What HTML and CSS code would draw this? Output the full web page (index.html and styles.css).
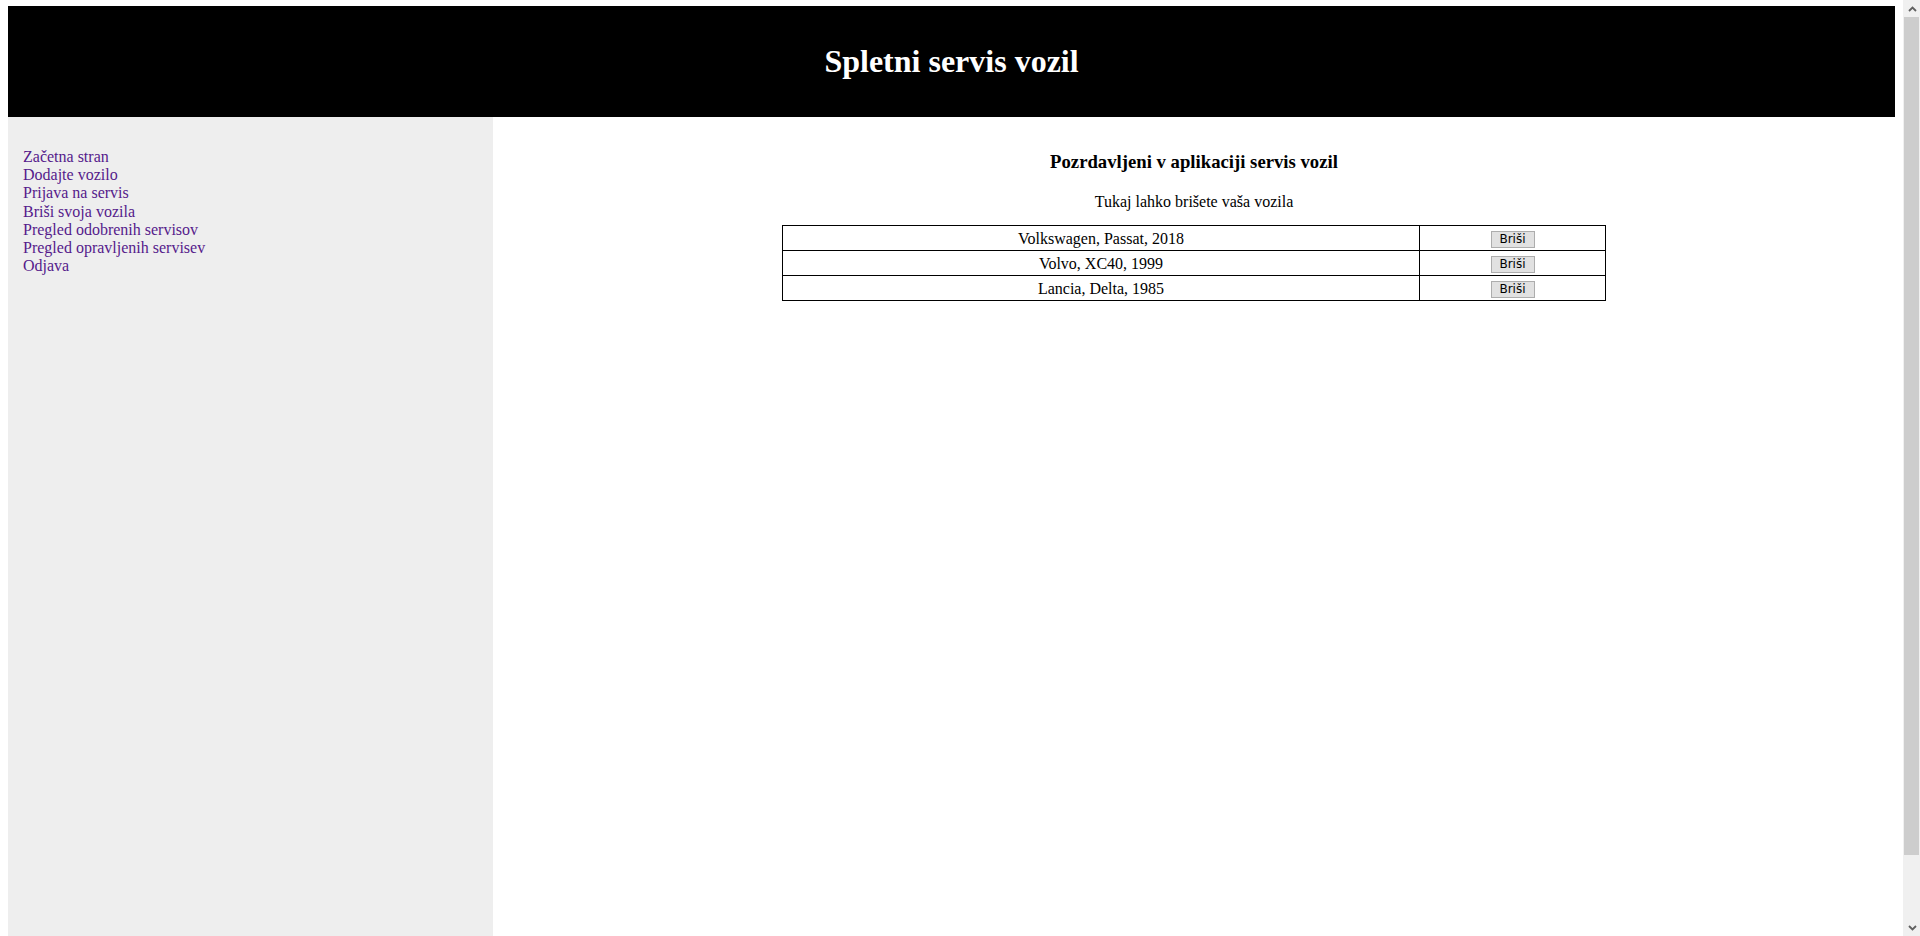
FILE: index.html
```html
<!DOCTYPE html>
<html lang="sl">
<head>
<meta charset="utf-8">
<title>Spletni servis vozil</title>
<link rel="stylesheet" href="styles.css">
</head>
<body>
<div class="viewport">
  <div class="page">
    <div class="header">
      <h1>Spletni servis vozil</h1>
    </div>
    <div class="layout">
      <nav class="sidebar">
        <ul class="menu">
          <li><a href="#">Začetna stran</a></li>
          <li><a href="#">Dodajte vozilo</a></li>
          <li><a href="#">Prijava na servis</a></li>
          <li><a href="#">Briši svoja vozila</a></li>
          <li><a href="#">Pregled odobrenih servisov</a></li>
          <li><a href="#">Pregled opravljenih servisev</a></li>
          <li><a href="#">Odjava</a></li>
        </ul>
      </nav>
      <main class="content">
        <h3 class="title">Pozrdavljeni v aplikaciji servis vozil</h3>
        <p class="intro">Tukaj lahko brišete vaša vozila</p>
        <table class="cars">
          <colgroup><col class="col-name"><col class="col-action"></colgroup>
          <tr><td>Volkswagen, Passat, 2018</td><td><button class="btn">Briši</button></td></tr>
          <tr><td>Volvo, XC40, 1999</td><td><button class="btn">Briši</button></td></tr>
          <tr><td>Lancia, Delta, 1985</td><td><button class="btn">Briši</button></td></tr>
        </table>
      </main>
    </div>
  </div>
  <div class="scrollbar" aria-hidden="true">
    <div class="sb-arrow">
      <svg width="9" height="6" viewBox="0 0 9 6"><path d="M1 5 L4.5 1.5 L8 5" fill="none" stroke="#606060" stroke-width="1.8"/></svg>
    </div>
    <div class="sb-thumb"></div>
    <div class="sb-track"></div>
    <div class="sb-arrow">
      <svg width="9" height="6" viewBox="0 0 9 6"><path d="M1 1 L4.5 4.5 L8 1" fill="none" stroke="#606060" stroke-width="1.8"/></svg>
    </div>
  </div>
</div>
</body>
</html>
```
FILE: styles.css
```css
html, body {
  margin: 0;
  padding: 0;
  background: #fff;
}
body {
  font-family: "Liberation Serif", "Times New Roman", serif;
  font-size: 16px;
  color: #000;
}
.viewport {
  display: flex;
  height: 936px;
  overflow: hidden;
}
.page {
  flex: 1;
  padding: 6px 8px 8px;
  min-width: 0;
}
.header {
  background: #000;
  color: #fff;
  text-align: center;
  padding: 15px;
  height: 81px;
}
.header h1 {
  margin: 22px 0 20px;
  font-size: 32px;
  line-height: 37px;
  font-weight: bold;
}
.layout {
  display: flex;
  min-height: 882px;
}
.sidebar {
  width: 455px;
  padding: 15px;
  background: #eeeeee;
}
.menu {
  list-style: none;
  margin: 16px 0;
  padding: 0;
}
.menu li {
  line-height: 18px;
  height: 18.2px;
}
.menu a {
  color: #551a8b;
  text-decoration: none;
}
.content {
  flex: 1;
  padding: 15px;
  text-align: center;
}
.title {
  margin: 19px 0 21px;
  font-size: 18.72px;
  line-height: 21px;
}
.intro {
  margin: 0 0 14px;
  line-height: 18px;
}
.cars {
  margin: 0 auto;
  width: 823px;
  border-collapse: collapse;
  table-layout: fixed;
  border: 1px solid #000;
}
.col-name { width: 637px; }
.col-action { width: 186px; }
.cars td {
  border: 1px solid #000;
  padding: 1px 0 0;
  height: 23px;
  text-align: center;
  vertical-align: middle;
}
.btn {
  font-family: "DejaVu Sans", Tahoma, sans-serif;
  font-size: 12px;
  height: 17px;
  width: 44px;
  padding: 0 2px;
  margin: 0;
  background: #e1e1e1;
  border: 1px solid #adadad;
  border-radius: 0;
  color: #000;
  line-height: 15px;
}
.scrollbar {
  width: 17px;
  flex: none;
  display: flex;
  flex-direction: column;
  background: #f0f0f0;
}
.sb-arrow {
  height: 17px;
  display: flex;
  align-items: center;
  justify-content: center;
  padding-left: 1px;
}
.sb-thumb {
  height: 838px;
  margin: 0 1px 0 1px;
  background: #cdcdcd;
}
.sb-track {
  flex: 1;
}
```
